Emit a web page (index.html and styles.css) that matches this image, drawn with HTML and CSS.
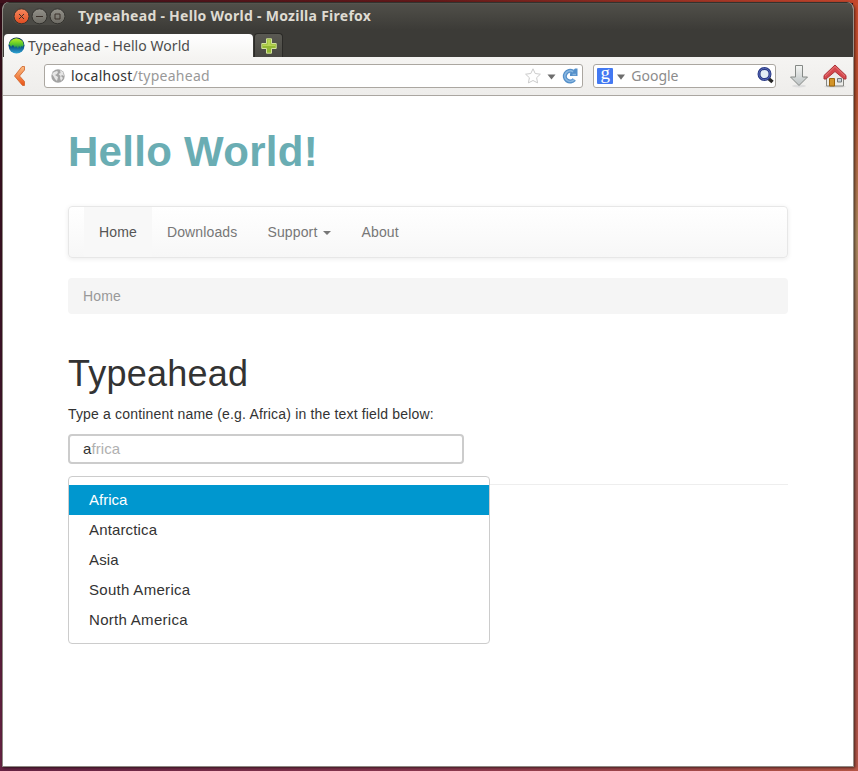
FILE: index.html
```html
<!DOCTYPE html>
<html lang="en">
<head>
<meta charset="utf-8">
<title>Typeahead - Hello World</title>
<link rel="stylesheet" href="styles.css">
</head>
<body>
<div class="window">
  <header class="chrome">
    <div class="titlebar">
      <div class="controls">
        <svg width="54" height="18" viewBox="0 0 54 18">
          <defs>
            <linearGradient id="close" x2="0" y2="1"><stop stop-color="#f7895f"/><stop offset="1" stop-color="#df4b20"/></linearGradient>
            <linearGradient id="ctl" x2="0" y2="1"><stop stop-color="#94928a"/><stop offset="1" stop-color="#6c6a63"/></linearGradient>
          </defs>
          <rect width="54" height="18" rx="9" fill="#4c4b46"/>
          <circle cx="9.500" cy="9.300" r="7.500" fill="url(#close)" stroke="#3a332d"/>
          <circle cx="27.500" cy="9.300" r="7.500" fill="url(#ctl)" stroke="#33322e"/>
          <circle cx="45.500" cy="9.300" r="7.500" fill="url(#ctl)" stroke="#33322e"/>
          <path d="M7 7l5 5M12 7l-5 5M24 9.500h7M43 7h5v5h-5z" fill="none" stroke="#3b302a" stroke-width="1"/>
        </svg>
      </div>
      <div class="title">Typeahead - Hello World - Mozilla Firefox</div>
    </div>
    <div class="tabs">
      <div class="tab">
        <svg width="17" height="17" viewBox="0 0 17 17">
          <defs>
            <linearGradient id="sea" x2="0" y2="1"><stop stop-color="#04284f"/><stop offset=".5" stop-color="#06457c"/><stop offset="1" stop-color="#2fa5d3"/></linearGradient>
            <linearGradient id="land" x2="0" y2="1"><stop stop-color="#b9f024"/><stop offset=".55" stop-color="#5cc72a"/><stop offset="1" stop-color="#087b78"/></linearGradient>
          </defs>
          <circle cx="8.500" cy="8.500" r="8" fill="url(#sea)"/>
          <path d="M2.500 4Q8-1.500 14.500 4l1.300 4-1.300 2-1-1-1 2-1.500-2-1 3-2-3-1 2-2-3-2 2-1.500-2.500-1 .5z" fill="url(#land)"/>
        </svg>
        <span class="tab-label">Typeahead - Hello World</span>
      </div>
      <div class="newtab">
        <svg width="16" height="16" viewBox="0 0 16 16"><path d="M5.500.800h5v4.700h4.700v5h-4.700v4.700h-5v-4.700H.8v-5h4.700z" fill="#94b835" stroke="#d3e39a"/><path d="M6.500 2h3v4.500H14v1.500H2v-1.500h4.500z" fill="#b9d455"/></svg>
      </div>
    </div>
    <div class="toolbar">
      <svg class="back" width="14" height="22" viewBox="0 0 14 22"><defs><linearGradient id="bk" x2="0" y2="1"><stop stop-color="#fbbd83"/><stop offset="1" stop-color="#e95316"/></linearGradient></defs><path d="M9 1.500h2.500v3.500L6.500 11l5 5.500v4H9.500L1.500 11z" fill="url(#bk)" stroke="#cf6228" stroke-width=".8" stroke-linejoin="round"/></svg>
      <div class="field url">
        <svg width="14" height="14" viewBox="0 0 14 14"><circle cx="7" cy="7" r="6.700" fill="#a3a3a3"/><path d="M1 5l2-2 3-1 1 1-1 2-2 1 3 2-1 4-2-2-1-2zM9 1l3 2 1 4-2-1-1 1 2 2-2 3-1-3 .5-2-2-2 2-1z" fill="#e6e6e6"/></svg>
        <span class="address">localhost<i>/typeahead</i></span>
        <svg width="16" height="16" viewBox="0 0 16 16"><path d="M8 .8l2.200 4.700 5.200.7-3.800 3.500 1 5.200L8 12.500l-4.600 2.400 1-5.200L.6 6.200l5.200-.7z" fill="#fff" stroke="#cbcbcb" stroke-linejoin="round"/></svg>
        <svg class="chev" width="9" height="6" viewBox="0 0 9 6"><path d="M.5.500h8l-4 5z" fill="#6d6d6d"/></svg>
        <svg width="16" height="16" viewBox="0 0 16 16"><path d="M10.800 3.600A5.300 5.300 0 1 0 12.300 11.500" fill="none" stroke="#5590ca" stroke-width="4.200"/><path d="M15.500.500v7.500H8V5.500L13 .5z" fill="#5590ca"/><path d="M11 3.800A5.200 5.200 0 1 0 12 11.600M10.500 6.500h3.500" fill="none" stroke="#8ab7e0" stroke-width="1.600"/></svg>
      </div>
      <div class="field search">
        <span class="g">g</span>
        <svg class="gchev" width="8" height="6" viewBox="0 0 8 6"><path d="M0 .5h8L4 5.800z" fill="#6d6d6d"/></svg>
        <span class="placeholder">Google</span>
        <svg width="17" height="17" viewBox="0 0 17 17"><path d="M11.500 11.500l4 3.500" stroke="#252525" stroke-width="3.500"/><circle cx="7.500" cy="7" r="5.500" fill="#e3edf4" stroke="#283984" stroke-width="3"/><circle cx="7.500" cy="7" r="5.600" fill="none" stroke="#6475c2" stroke-width=".8"/></svg>
      </div>
      <svg class="down" width="20" height="24" viewBox="0 0 20 24"><defs><linearGradient id="dn" x2="0" y2="1"><stop stop-color="#f5f6f4"/><stop offset="1" stop-color="#bcc2c3"/></linearGradient></defs><ellipse cx="10" cy="22" rx="7" ry="1.500" fill="#ddd"/><path d="M6.500 1.500h7v11.500h5L10 21.500 1.500 13h5z" fill="url(#dn)" stroke="#858986" stroke-linejoin="round"/></svg>
      <svg width="24" height="24" viewBox="0 0 24 24"><ellipse cx="12" cy="22.500" rx="11" ry="1.300" fill="#ddd"/><path d="M3.500 11L12 4l8.500 7v11h-17z" fill="#ecece9" stroke="#858580"/><path d="M12 1L1 11.500v3.500h2L12 7.500l9 7.500h2v-3.500z" fill="#d5484d" stroke="#ad3338" stroke-linejoin="round"/><path d="M2 12.200L12 2.500 22 12.200" fill="none" stroke="#e67b7c"/><path d="M6.500 14.500h5v7.500h-5z" fill="#d29429" stroke="#9c640d"/><path d="M14.500 14.500h4v3.500h-4z" fill="#c6d2d9" stroke="#71777a"/></svg>
    </div>
  </header>
  <main class="page">
    <h1 class="brand">Hello World!</h1>
    <nav class="navbar">
      <a class="active">Home</a><a>Downloads</a><a>Support <b class="caret"></b></a><a>About</a>
    </nav>
    <div class="breadcrumb">Home</div>
    <h2 class="heading">Typeahead</h2>
    <p class="hint">Type a continent name (e.g. Africa) in the text field below:</p>
    <div class="typeahead">
      <div class="input">a<span>frica</span></div>
      <ul class="menu">
        <li class="selected">Africa</li>
        <li>Antarctica</li>
        <li>Asia</li>
        <li>South America</li>
        <li>North America</li>
      </ul>
    </div>
    <hr class="rule">
  </main>
</div>
</body>
</html>
```
FILE: styles.css
```css
* { box-sizing: border-box; }
body {
  margin: 0;
  height: 771px;
  padding: 2px 3px 3px 2px;
  overflow: hidden;
  background:
    linear-gradient(90deg, #40101c, #651a1a 50%, #c5472d) top / 100% 3px no-repeat,
    linear-gradient(90deg, #672344, #8b3850 50%, #b95747) bottom / 100% 4px no-repeat,
    linear-gradient(#c94a2c, #b8502f 12%, #ad8a60 31%, #a8695a 50%, #a85650 75%, #b35548) right / 5px 100% no-repeat,
    linear-gradient(#320d17, #3d1428 50%, #672344);
}
svg { display: block; flex: none; }
.window {
  width: 852px;
  height: 765px;
  display: flex;
  flex-direction: column;
  border: 1px solid #8f8983;
  border-top: 0;
  border-right-color: #98918a;
  border-radius: 7px 7px 0 0;
  background: #fff;
  overflow: hidden;
  box-shadow: 1px 1px 3px rgba(0, 0, 0, .6);
}
.chrome {
  font-family: "Noto Sans", "Open Sans", sans-serif;
  background: linear-gradient(#33322e 0 1px, #5b5a54 1px, #504f49 2px, #3c3b37 28px);
  flex: none;
}
.titlebar { display: flex; height: 31px; padding: 5px 0 0 9px; }
.title {
  margin-left: 12px;
  font-size: 14px;
  font-weight: 700;
  line-height: 18px;
  letter-spacing: .27px;
  color: #dfdbd2;
  white-space: nowrap;
}
.tabs { display: flex; height: 24px; padding-left: 1px; }
.tab {
  display: flex;
  align-items: center;
  gap: 3px;
  width: 249px;
  padding: 0 5px 0 4px;
  margin-top: 1px;
  border-radius: 4px 4px 0 0;
  background: linear-gradient(#fff, #f5f4f2);
}
.tab-label { font-size: 14px; letter-spacing: .06px; color: #4c4c4c; white-space: nowrap; }
.newtab {
  display: flex;
  align-items: center;
  justify-content: center;
  width: 29px;
  margin: 0 0 0 1px;
  border: 1px solid #2b2a27;
  border-bottom: 0;
  border-radius: 4px 4px 0 0;
  background: linear-gradient(#5a5953, #484742);
}
.toolbar {
  display: flex;
  align-items: center;
  height: 39px;
  padding: 0 6px 1px 10px;
  border-bottom: 1px solid #aaa6a1;
  background: linear-gradient(#f5f4f2, #eeedeb);
}
.field {
  display: flex;
  align-items: center;
  height: 24px;
  border: 1px solid #aba7a1;
  border-radius: 3px;
  background: #fff;
  font-size: 14px;
  color: #333;
}
.url { width: 539px; margin-left: 17px; padding: 0 4px 0 6px; }
.address { flex: 1; margin-left: 6px; letter-spacing: .26px; }
.address i { font-style: normal; color: #999; }
.chev { margin: 2px 6px 0 6px; }
.search { width: 183px; margin-left: 10px; padding: 0 1px 0 3px; }
.g {
  width: 16px;
  height: 16px;
  border-radius: 1px;
  background: #4379f2;
  color: #fff;
  font: 19px/10px "Liberation Serif", serif;
  text-align: center;
}
.gchev { margin: 2px 6px 0 4px; }
.placeholder { flex: 1; color: #8c8c8c; }
.down { margin: 0 14px 0 13px; }
.url, .search { position: relative; }
.url { width: 540px; }
.page {
  flex: 1;
  padding: 31px 65px 0;
  font: 14px/20px "Liberation Sans", Arial, sans-serif;
  color: #333;
}
.brand {
  margin: 0;
  font-size: 42px;
  line-height: 50px;
  letter-spacing: .28px;
  color: #6aadb3;
}
.navbar {
  display: flex;
  height: 52px;
  margin-top: 29px;
  padding: 0 15px;
  border: 1px solid #e7e7e7;
  border-radius: 4px;
  background: linear-gradient(#fff, #f7f7f7);
  box-shadow: 0 1px 5px rgba(0, 0, 0, .08);
}
.navbar a { padding: 15px; color: #777; letter-spacing: .14px; }
.navbar .active { height: 50px; color: #555; background: #f8f8f8; }
.caret {
  display: inline-block;
  margin-left: 2px;
  vertical-align: middle;
  border: 4px solid transparent;
  border-top-color: #777;
  border-bottom: 0;
}
.breadcrumb {
  height: 36px;
  margin-top: 20px;
  padding: 8px 15px;
  border-radius: 4px;
  background: #f5f5f5;
  color: #999;
  letter-spacing: .14px;
}
.heading { margin: 40px 0 0; font-size: 36px; font-weight: 400; line-height: 40px; letter-spacing: .22px; }
.hint { margin: 10px 0; letter-spacing: .17px; }
.typeahead { position: relative; font-size: 15px; }
.input {
  width: 396px;
  height: 30px;
  padding: 0 13px;
  border: 2px solid #ccc;
  border-radius: 4px;
  line-height: 26px;
  letter-spacing: .1px;
}
.input span { color: #b0b0b0; }
.menu {
  position: absolute;
  top: 42px;
  left: 0;
  width: 422px;
  height: 168px;
  margin: 0;
  padding: 8px 0;
  border: 1px solid #ccc;
  border-radius: 4px;
  background: #fff;
  list-style: none;
  letter-spacing: .15px;
}
.menu li { height: 30px; padding: 0 20px; line-height: 30px; }
.menu li:nth-child(n + 4) { letter-spacing: .3px; }
.menu .selected { background: #0097cf; color: #fff; letter-spacing: 0; }
.rule { margin: 20px 0 0; border: 0; border-top: 1px solid #eee; }
```
